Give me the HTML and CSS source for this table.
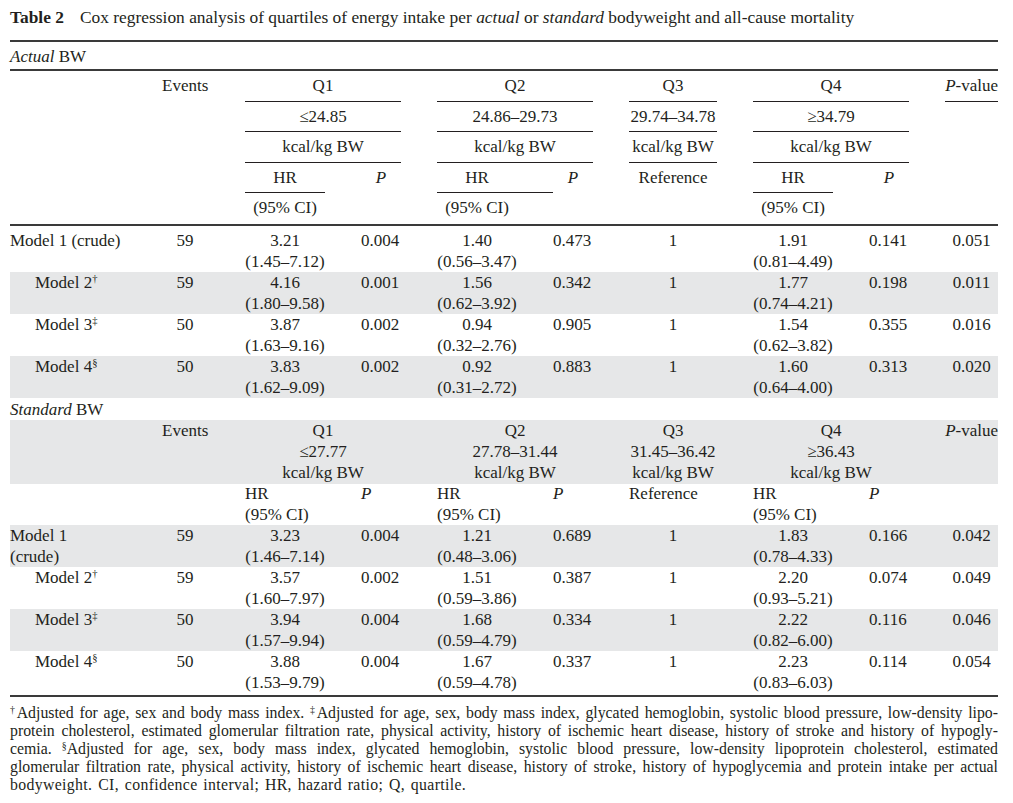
FILE: index.html
```html
<!DOCTYPE html>
<html lang="en">
<head>
<meta charset="utf-8">
<title>Table 2 – Cox regression analysis</title>
<link rel="stylesheet" href="styles.css">
</head>
<body>
<div class="page">
  <p class="caption"><b class="cap-label">Table 2</b>Cox regression analysis of quartiles of energy intake per <i>actual</i> or <i>standard</i> bodyweight and all-cause mortality</p>
  <div class="rule"></div>
  <div class="section section-top"><i>Actual</i> BW</div>
  <div class="rule"></div>

  <table class="grid head-a">
    <colgroup>
      <col class="w-label"><col class="w-ev"><col class="w-hr"><col class="w-p"><col class="w-gap"><col class="w-hr2"><col class="w-p2"><col class="w-gap"><col class="w-q3"><col class="w-gap"><col class="w-hr"><col class="w-p"><col class="w-gap"><col class="w-pv">
    </colgroup>
    <tr>
      <td></td><td class="ev">Events</td><td colspan="2" class="c ul">Q1</td><td></td><td colspan="2" class="c ul">Q2</td><td></td><td class="c ul">Q3</td><td></td><td colspan="2" class="c ul">Q4</td><td></td><td class="r ul"><i>P</i>-value</td>
    </tr>
    <tr>
      <td></td><td></td><td colspan="2" class="c ul">≤24.85</td><td></td><td colspan="2" class="c ul">24.86–29.73</td><td></td><td class="c ul">29.74–34.78</td><td></td><td colspan="2" class="c ul">≥34.79</td><td></td><td></td>
    </tr>
    <tr>
      <td></td><td></td><td colspan="2" class="c ul">kcal/kg BW</td><td></td><td colspan="2" class="c ul">kcal/kg BW</td><td></td><td class="c ul">kcal/kg BW</td><td></td><td colspan="2" class="c ul">kcal/kg BW</td><td></td><td></td>
    </tr>
    <tr>
      <td></td><td></td><td class="c ul">HR</td><td class="pc c"><i>P</i></td><td></td><td class="c ul hr2">HR</td><td class="c"><i>P</i></td><td></td><td class="c">Reference</td><td></td><td class="c ul">HR</td><td class="pc c"><i>P</i></td><td></td><td></td>
    </tr>
    <tr>
      <td></td><td></td><td class="c">(95% CI)</td><td></td><td></td><td class="c hr2">(95% CI)</td><td></td><td></td><td></td><td></td><td class="c">(95% CI)</td><td></td><td></td><td></td>
    </tr>
  </table>
  <div class="rule"></div>

  <table class="grid body body-a">
    <colgroup>
      <col class="w-label"><col class="w-ev"><col class="w-hr"><col class="w-p"><col class="w-gap"><col class="w-hr2"><col class="w-p2"><col class="w-gap"><col class="w-q3"><col class="w-gap"><col class="w-hr"><col class="w-p"><col class="w-gap"><col class="w-pv">
    </colgroup>
    <tr>
      <td>Model 1 (crude)</td><td class="ev">59</td><td class="c">3.21<br>(1.45–7.12)</td><td class="pc">0.004</td><td></td><td class="c hr2">1.40<br>(0.56–3.47)</td><td>0.473</td><td></td><td class="c">1</td><td></td><td class="c">1.91<br>(0.81–4.49)</td><td class="pc">0.141</td><td></td><td class="c">0.051</td>
    </tr>
    <tr class="shade">
      <td class="ind">Model 2<sup>†</sup></td><td class="ev">59</td><td class="c">4.16<br>(1.80–9.58)</td><td class="pc">0.001</td><td></td><td class="c hr2">1.56<br>(0.62–3.92)</td><td>0.342</td><td></td><td class="c">1</td><td></td><td class="c">1.77<br>(0.74–4.21)</td><td class="pc">0.198</td><td></td><td class="c">0.011</td>
    </tr>
    <tr>
      <td class="ind">Model 3<sup>‡</sup></td><td class="ev">50</td><td class="c">3.87<br>(1.63–9.16)</td><td class="pc">0.002</td><td></td><td class="c hr2">0.94<br>(0.32–2.76)</td><td>0.905</td><td></td><td class="c">1</td><td></td><td class="c">1.54<br>(0.62–3.82)</td><td class="pc">0.355</td><td></td><td class="c">0.016</td>
    </tr>
    <tr class="shade">
      <td class="ind">Model 4<sup>§</sup></td><td class="ev">50</td><td class="c">3.83<br>(1.62–9.09)</td><td class="pc">0.002</td><td></td><td class="c hr2">0.92<br>(0.31–2.72)</td><td>0.883</td><td></td><td class="c">1</td><td></td><td class="c">1.60<br>(0.64–4.00)</td><td class="pc">0.313</td><td></td><td class="c">0.020</td>
    </tr>
  </table>

  <div class="section section-std"><i>Standard</i> BW</div>

  <table class="grid body head-b">
    <colgroup>
      <col class="w-label"><col class="w-ev"><col class="w-hr"><col class="w-p"><col class="w-gap"><col class="w-hr2"><col class="w-p2"><col class="w-gap"><col class="w-q3"><col class="w-gap"><col class="w-hr"><col class="w-p"><col class="w-gap"><col class="w-pv">
    </colgroup>
    <tr class="shade top3">
      <td></td><td>Events</td><td colspan="2" class="c">Q1<br>≤27.77<br>kcal/kg BW</td><td></td><td colspan="2" class="c">Q2<br>27.78–31.44<br>kcal/kg BW</td><td></td><td class="c">Q3<br>31.45–36.42<br>kcal/kg BW</td><td></td><td colspan="2" class="c">Q4<br>≥36.43<br>kcal/kg BW</td><td></td><td class="r"><i>P</i>-value</td>
    </tr>
    <tr class="sub">
      <td></td><td></td><td>HR<br>(95% CI)</td><td class="pc"><i>P</i></td><td></td><td>HR<br>(95% CI)</td><td><i>P</i></td><td></td><td>Reference</td><td></td><td>HR<br>(95% CI)</td><td class="pc"><i>P</i></td><td></td><td></td>
    </tr>
    <tr class="shade">
      <td>Model 1<br>(crude)</td><td class="ev">59</td><td class="c">3.23<br>(1.46–7.14)</td><td class="pc">0.004</td><td></td><td class="c hr2">1.21<br>(0.48–3.06)</td><td>0.689</td><td></td><td class="c">1</td><td></td><td class="c">1.83<br>(0.78–4.33)</td><td class="pc">0.166</td><td></td><td class="c">0.042</td>
    </tr>
    <tr>
      <td class="ind">Model 2<sup>†</sup></td><td class="ev">59</td><td class="c">3.57<br>(1.60–7.97)</td><td class="pc">0.002</td><td></td><td class="c hr2">1.51<br>(0.59–3.86)</td><td>0.387</td><td></td><td class="c">1</td><td></td><td class="c">2.20<br>(0.93–5.21)</td><td class="pc">0.074</td><td></td><td class="c">0.049</td>
    </tr>
    <tr class="shade">
      <td class="ind">Model 3<sup>‡</sup></td><td class="ev">50</td><td class="c">3.94<br>(1.57–9.94)</td><td class="pc">0.004</td><td></td><td class="c hr2">1.68<br>(0.59–4.79)</td><td>0.334</td><td></td><td class="c">1</td><td></td><td class="c">2.22<br>(0.82–6.00)</td><td class="pc">0.116</td><td></td><td class="c">0.046</td>
    </tr>
    <tr>
      <td class="ind">Model 4<sup>§</sup></td><td class="ev">50</td><td class="c">3.88<br>(1.53–9.79)</td><td class="pc">0.004</td><td></td><td class="c hr2">1.67<br>(0.59–4.78)</td><td>0.337</td><td></td><td class="c">1</td><td></td><td class="c">2.23<br>(0.83–6.03)</td><td class="pc">0.114</td><td></td><td class="c">0.054</td>
    </tr>
  </table>
  <div class="rule rule-end"></div>

  <div class="notes">
    <span class="jl"><sup>†</sup>Adjusted for age, sex and body mass index. <sup>‡</sup>Adjusted for age, sex, body mass index, glycated hemoglobin, systolic blood pressure, low-density lipo-</span>
    <span class="jl">protein cholesterol, estimated glomerular filtration rate, physical activity, history of ischemic heart disease, history of stroke and history of hypogly-</span>
    <span class="jl">cemia. <sup>§</sup>Adjusted for age, sex, body mass index, glycated hemoglobin, systolic blood pressure, low-density lipoprotein cholesterol, estimated</span>
    <span class="jl">glomerular filtration rate, physical activity, history of ischemic heart disease, history of stroke, history of hypoglycemia and protein intake per actual</span>
    <span class="last">bodyweight. CI, confidence interval; HR, hazard ratio; Q, quartile.</span>
  </div>
</div>
</body>
</html>
```

FILE: styles.css
```css
html, body {
  margin: 0;
  padding: 0;
  background: #ffffff;
}

body {
  font-family: "Liberation Serif", "Times New Roman", serif;
  font-size: 17px;
  color: #231f20;
}

.page {
  width: 988px;
  padding: 0 15px 0 10px;
}

.caption {
  margin: 0;
  padding-top: 7px;
  height: 33px;
  line-height: 20px;
  font-size: 17.4px;
  white-space: nowrap;
}

.cap-label {
  font-weight: bold;
  margin-right: 16px;
}

.rule {
  height: 2px;
  background: #3a3a3a;
}

.section {
  line-height: 21px;
}

.section-top {
  padding: 4px 0 2px;
}

.section-std {
  padding-top: 1.5px;
}

.grid {
  width: 988px;
  table-layout: fixed;
  border-collapse: separate;
  border-spacing: 0;
}

.w-label { width: 152px; }
.w-ev { width: 83px; }
.w-hr { width: 80px; }
.w-p { width: 76px; }
.w-gap { width: 36px; }
.w-hr2 { width: 116px; }
.w-p2 { width: 40px; }
.w-q3 { width: 88px; }
.w-pv { width: 53px; }

.grid td {
  padding: 0;
  vertical-align: top;
  white-space: nowrap;
  text-align: left;
}

.head-a td {
  line-height: 20.6px;
  padding: 5px 0 4px;
  border-bottom: 1px solid transparent;
}

.head-a td.ul {
  border-bottom-color: #231f20;
}

.grid td.c { text-align: center; }
.grid td.r { text-align: right; }

.grid td.ev {
  text-align: center;
  padding-right: 37px;
}

.head-a td.ev {
  text-align: left;
  padding-right: 0;
}

.grid td.pc {
  padding-left: 36px;
}

.grid td.hr2 {
  padding-right: 36px;
}

.body td {
  line-height: 21px;
}

.sub td {
  line-height: 20.5px;
}

.body-a {
  margin-top: 4px;
}

.grid td.ind {
  padding-left: 25px;
}

.shade td {
  background: #e6e7e8;
}

.top3 td {
  padding-bottom: 1px;
}

.rule-end {
  margin-top: 2px;
}

sup {
  font-size: 0.62em;
  line-height: 0;
  vertical-align: 0.55em;
}

.notes {
  margin-top: 7px;
  font-size: 15.8px;
  line-height: 18px;
}

.notes span {
  display: block;
  white-space: nowrap;
}

.notes .jl {
  text-align: justify;
  text-align-last: justify;
}

.notes .last {
  letter-spacing: 0.35px;
  word-spacing: 1.5px;
}
```
